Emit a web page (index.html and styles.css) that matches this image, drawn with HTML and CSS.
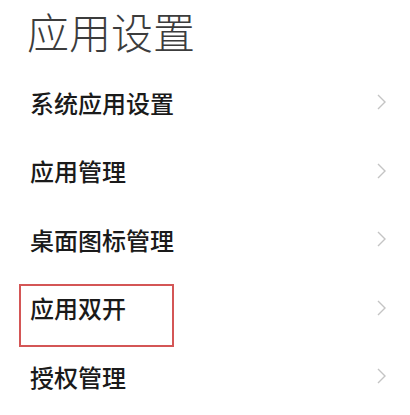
FILE: index.html
```html
<!DOCTYPE html>
<html lang="zh">
<head>
<meta charset="utf-8">
<link rel="stylesheet" href="styles.css">
</head>
<body>
<div class="page">
  <h1 class="title">应用设置</h1>
  <ul class="list">
    <li class="row"><span class="label">系统应用设置</span><svg class="chev" viewBox="0 0 9 16" width="9" height="16"><polyline points="1,1 8,8 1,15"/></svg></li>
    <li class="row"><span class="label">应用管理</span><svg class="chev" viewBox="0 0 9 16" width="9" height="16"><polyline points="1,1 8,8 1,15"/></svg></li>
    <li class="row"><span class="label">桌面图标管理</span><svg class="chev" viewBox="0 0 9 16" width="9" height="16"><polyline points="1,1 8,8 1,15"/></svg></li>
    <li class="row"><span class="label">应用双开</span><svg class="chev" viewBox="0 0 9 16" width="9" height="16"><polyline points="1,1 8,8 1,15"/></svg><span class="mark"></span></li>
    <li class="row"><span class="label">授权管理</span><svg class="chev" viewBox="0 0 9 16" width="9" height="16"><polyline points="1,1 8,8 1,15"/></svg></li>
  </ul>
</div>
</body>
</html>
```
FILE: styles.css
```css
html, body {
  margin: 0;
  padding: 0;
  background: #ffffff;
}
.page {
  width: 410px;
  height: 415px;
  overflow: hidden;
  font-family: "Noto Sans CJK SC", "Noto Sans", sans-serif;
}
.title {
  margin: 0;
  padding-left: 27px;
  height: 62px;
  line-height: 62px;
  font-size: 42px;
  font-weight: 300;
  color: #3c3c3c;
}
.list {
  list-style: none;
  margin: 6px 0 0 0;
  padding: 0;
}
.row {
  position: relative;
  height: 68.5px;
  display: flex;
  align-items: center;
  justify-content: space-between;
  padding: 0 24px 0 30px;
}
.label {
  font-size: 24px;
  font-weight: 500;
  color: #1a1a1a;
}
.chev {
  display: block;
}
.chev polyline {
  fill: none;
  stroke: #c4c4c4;
  stroke-width: 1.4;
}
.mark {
  position: absolute;
  left: 19px;
  top: 10px;
  width: 151px;
  height: 59px;
  border: 2px solid #d45656;
}
```
